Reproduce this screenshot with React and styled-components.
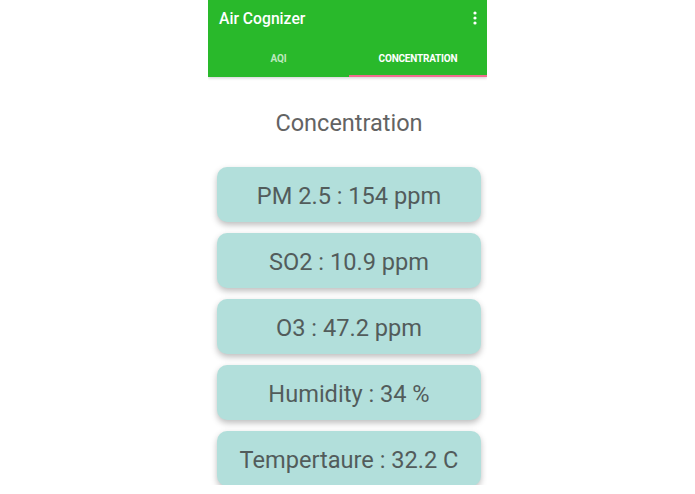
import React from "react";
import styled, { createGlobalStyle } from "styled-components";

const GlobalStyle = createGlobalStyle`
  html, body {
    margin: 0;
    padding: 0;
    background: #ffffff;
    font-family: Roboto, "Liberation Sans", Arial, sans-serif;
  }
`;

const Page = styled.div`
  width: 695px;
  height: 494px;
  overflow: hidden;
  display: flex;
  justify-content: flex-start;
  padding-left: 208px;
  box-sizing: border-box;
`;

const Screen = styled.div`
  width: 279px;
  height: 485px;
  display: flex;
  flex-direction: column;
  background: #ffffff;
  overflow: hidden;
`;

const Header = styled.header`
  background: #29b92b;
  box-shadow: 0 1px 3px rgba(0, 0, 0, 0.2);
  position: relative;
  z-index: 1;
`;

const Toolbar = styled.div`
  height: 36px;
  display: flex;
  align-items: center;
  justify-content: space-between;
  padding: 0 10px 0 11px;
`;

const AppTitle = styled.div`
  color: #ffffff;
  font-size: 15.7px;
  font-weight: 500;
`;

const Tabs = styled.div`
  display: grid;
  grid-template-columns: 141px 138px;
  height: 41px;
`;

const Tab = styled.div`
  display: flex;
  align-items: center;
  justify-content: center;
  font-size: 10px;
  font-weight: 700;
  letter-spacing: -0.2px;
  color: ${(p) => (p.active ? "#ffffff" : "rgba(255,255,255,0.7)")};
  border-bottom: 2px solid ${(p) => (p.active ? "#f06c8f" : "transparent")};
  padding-top: 5px;
`;

const Content = styled.main`
  display: flex;
  flex-direction: column;
  align-items: flex-start;
  padding: 0 6px 0 9px;
`;

const Heading = styled.h2`
  align-self: center;
  margin: 33px 0 31px 0;
  font-size: 23.5px;
  line-height: 26px;
  font-weight: 400;
  color: #636363;
`;

const Card = styled.div`
  width: 264px;
  height: 55px;
  flex-shrink: 0;
  border-radius: 10px;
  background: #b2dfdb;
  box-shadow: 0 3px 6px rgba(0, 0, 0, 0.26);
  display: flex;
  align-items: center;
  justify-content: center;
  padding-top: 2px;
  box-sizing: border-box;
  font-size: 23.6px;
  color: #525c5b;
  margin-bottom: 11px;
`;

const Kebab = () => (
  <svg width="4" height="14" viewBox="0 0 4 14">
    <circle cx="2" cy="2" r="1.6" fill="#fff" />
    <circle cx="2" cy="7" r="1.6" fill="#fff" />
    <circle cx="2" cy="12" r="1.6" fill="#fff" />
  </svg>
);

const readings = [
  "PM 2.5 : 154 ppm",
  "SO2 : 10.9 ppm",
  "O3 : 47.2 ppm",
  "Humidity : 34 %",
  "Tempertaure : 32.2 C",
];

export default function App() {
  return (
    <Page>
      <GlobalStyle />
      <Screen>
        <Header>
          <Toolbar>
            <AppTitle>Air Cognizer</AppTitle>
            <Kebab />
          </Toolbar>
          <Tabs>
            <Tab>AQI</Tab>
            <Tab active>CONCENTRATION</Tab>
          </Tabs>
        </Header>
        <Content>
          <Heading>Concentration</Heading>
          {readings.map((r) => (
            <Card key={r}>{r}</Card>
          ))}
        </Content>
      </Screen>
    </Page>
  );
}
